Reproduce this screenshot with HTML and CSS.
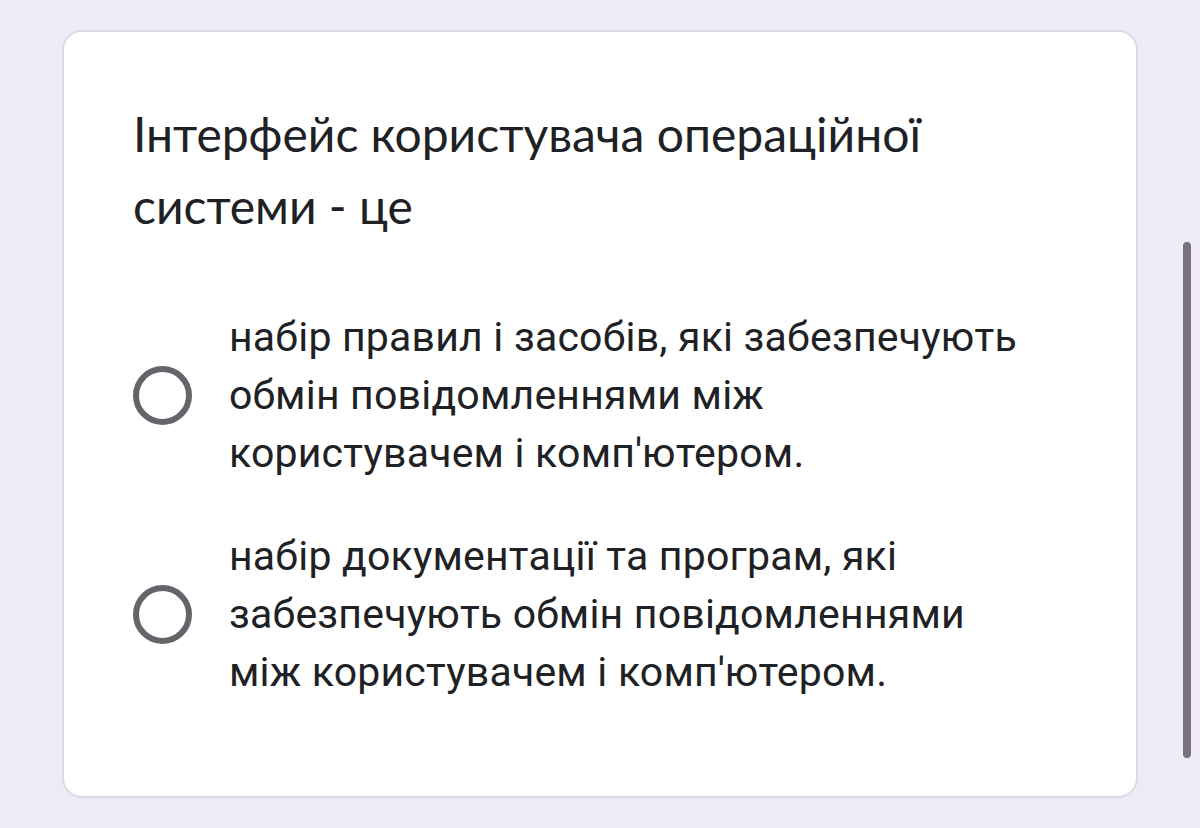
FILE: index.html
```html
<!DOCTYPE html>
<html lang="uk">
<head>
<meta charset="utf-8">
<link rel="stylesheet" href="styles.css">
</head>
<body>
<div class="page">
  <div class="card">
    <div class="title">Інтерфейс користувача операційної системи - це</div>
    <div class="options">
      <label class="option">
        <span class="radio"></span>
        <span class="opt-text">набір правил і засобів, які забезпечують обмін повідомленнями між користувачем і комп'ютером.</span>
      </label>
      <label class="option">
        <span class="radio"></span>
        <span class="opt-text">набір документації та програм, які забезпечують обмін повідомленнями між користувачем і комп'ютером.</span>
      </label>
    </div>
  </div>
  <div class="scroll-track"><div class="scroll-thumb"></div></div>
</div>
</body>
</html>
```

FILE: styles.css
```css
html, body {
  margin: 0;
  padding: 0;
  background: #efeaf8;
}
.page {
  display: flex;
  align-items: flex-start;
  padding: 30px 0 0 62px;
  height: 828px;
  box-sizing: border-box;
}
.card {
  width: 1076px;
  height: 768px;
  box-sizing: border-box;
  background: #ffffff;
  border: 2px solid #dcdae0;
  border-radius: 20px;
  padding: 66px 60px 0 69px;
}
.title {
  font-family: "Lato", "Open Sans", sans-serif;
  font-size: 48px;
  line-height: 72px;
  color: #202124;
  width: 840px;
}
.options {
  display: flex;
  flex-direction: column;
  gap: 45px;
  margin-top: 66px;
}
.option {
  display: flex;
  align-items: center;
  gap: 37px;
}
.radio {
  flex: none;
  width: 59px;
  height: 59px;
  box-sizing: border-box;
  border: 6px solid #67636b;
  border-radius: 50%;
}
.opt-text {
  font-family: "Roboto", sans-serif;
  font-size: 41px;
  line-height: 58px;
  color: #202124;
  width: 800px;
  letter-spacing: 0.2px;
}
.scroll-track {
  margin-left: 45px;
  padding-top: 212px;
}
.scroll-thumb {
  width: 8px;
  height: 516px;
  border-radius: 4px;
  background: #77727c;
}
```
